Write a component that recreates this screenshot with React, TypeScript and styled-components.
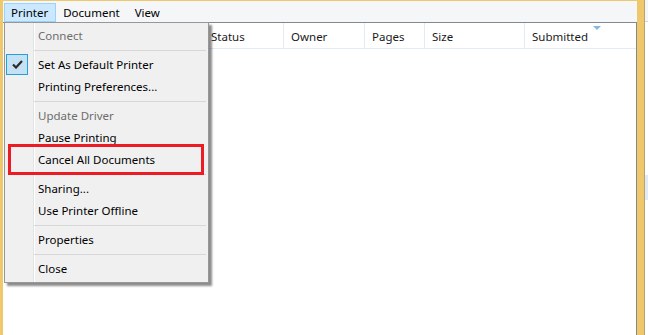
import React from "react";
import styled, { createGlobalStyle } from "styled-components";

const GlobalStyle = createGlobalStyle`
  html, body {
    margin: 0;
    padding: 0;
    background: #fff;
  }
  body {
    font-family: "Noto Sans", "Segoe UI", sans-serif;
    font-size: 11.5px;
    color: #000;
  }
`;

type MenuEntry =
  | { kind: "item"; label: string; disabled?: boolean; checked?: boolean }
  | { kind: "sep" };

const printerMenu: MenuEntry[] = [
  { kind: "item", label: "Connect", disabled: true },
  { kind: "sep" },
  { kind: "item", label: "Set As Default Printer", checked: true },
  { kind: "item", label: "Printing Preferences..." },
  { kind: "sep" },
  { kind: "item", label: "Update Driver", disabled: true },
  { kind: "item", label: "Pause Printing" },
  { kind: "item", label: "Cancel All Documents" },
  { kind: "sep" },
  { kind: "item", label: "Sharing..." },
  { kind: "item", label: "Use Printer Offline" },
  { kind: "sep" },
  { kind: "item", label: "Properties" },
  { kind: "sep" },
  { kind: "item", label: "Close" },
];

// first column is covered by the open menu
const columns = [
  { title: "" },
  { title: "Status" },
  { title: "Owner" },
  { title: "Pages" },
  { title: "Size" },
  { title: "Submitted", sorted: true },
];

// Page / window frame
const Screen = styled.div`
  position: relative;
  width: 648px;
  height: 335px;
  display: flex;
  overflow: hidden;
`;

const Window = styled.div`
  flex: 0 0 644px;
  box-sizing: border-box;
  display: flex;
  flex-direction: column;
  border-left: 3px solid #efc86c;
  border-top: 1px solid #efc86c;
  border-right: 7px solid #efc86c;
  background: #fff;
`;

const BackWindow = styled.div`
  flex: 1;
  border-left: 1px solid #b9a372;
  background: linear-gradient(
    to bottom,
    #f4f5f6 0 21px,
    #d6d6d6 21px 22px,
    #fff 22px 175px,
    #dfecf7 175px 200px,
    #fff 200px
  );
`;

// Menu bar
const MenuBar = styled.div`
  height: 21px;
  display: flex;
  align-items: flex-end;
  padding-left: 1px;
  background: #f5f6f7;
`;

const MenuBarItem = styled.div<{ $open?: boolean }>`
  height: 19px;
  box-sizing: border-box;
  display: flex;
  align-items: center;
  padding: 0 7px 0 6px;
  border: 1px solid ${(p) => (p.$open ? "#99d1ff" : "transparent")};
  background: ${(p) => (p.$open ? "#cce8ff" : "transparent")};
`;

// List view
const ListView = styled.div`
  flex: 1;
  border-top: 1px solid #828790;
  border-right: 1px solid #828790;
  background: #fff;
`;

const Header = styled.div`
  display: grid;
  grid-template-columns: 200px 80px 81px 60px 100px 1fr;
  height: 25px;
  border-bottom: 1px solid #e3ebf4;
`;

const HeaderCell = styled.div<{ $first?: boolean }>`
  position: relative;
  display: flex;
  align-items: center;
  padding: 2px 0 0 7px;
  border-left: ${(p) => (p.$first ? "none" : "1px solid #e3ebf4")};
  color: #1a1a1a;
  white-space: nowrap;
  overflow: hidden;
`;

const SortArrow = styled.span`
  position: absolute;
  left: 68px;
  top: 3px;
  width: 0;
  height: 0;
  border-left: 4px solid transparent;
  border-right: 4px solid transparent;
  border-top: 4px solid #86b8e2;
`;

// Drop-down menu
const Dropdown = styled.div`
  position: absolute;
  left: 4px;
  top: 22px;
  width: 205px;
  box-sizing: border-box;
  padding: 2px 0;
  border: 1px solid #979797;
  background: linear-gradient(
    to right,
    #f0f0f0 28px,
    #e2e3e3 28px 29px,
    #ffffff 29px 30px,
    #f0f0f0 30px
  );
  box-shadow: 3px 3px 2px rgba(0, 0, 0, 0.45);
`;

const Item = styled.div<{ $disabled?: boolean }>`
  height: 22px;
  box-sizing: border-box;
  padding-bottom: 1px;
  display: flex;
  align-items: center;
  color: ${(p) => (p.$disabled ? "#6d6d6d" : "#000")};
  white-space: nowrap;
`;

const Gutter = styled.div`
  width: 28px;
  height: 21px;
  display: flex;
  align-items: flex-start;
  padding-left: 1px;
  box-sizing: border-box;
`;

const CheckBox = styled.div`
  width: 22px;
  height: 21px;
  box-sizing: border-box;
  display: flex;
  align-items: center;
  justify-content: center;
  background: #c5e2f4;
  border: 1px solid #26a0da;
`;

const Label = styled.span`
  margin-left: 5px;
`;

const Separator = styled.div`
  height: 7px;
  display: flex;
  align-items: center;
  padding: 0 2px 0 29px;

  &::after {
    content: "";
    flex: 1;
    height: 1px;
    background: #d7d7d7;
  }
`;

// Annotation
const Highlight = styled.div`
  position: absolute;
  left: 8px;
  top: 144px;
  width: 196px;
  height: 31px;
  box-sizing: border-box;
  border: 3px solid #ed1c24;
`;

const CheckMark = () => (
  <svg width="11" height="9" viewBox="0 0 11 9">
    <path d="M1 4.5 L4 7.5 L10 1" fill="none" stroke="#2b2b2b" strokeWidth="2.2" />
  </svg>
);

export default function App() {
  return (
    <>
      <GlobalStyle />
      <Screen>
        <Window>
          <MenuBar>
            <MenuBarItem $open>Printer</MenuBarItem>
            <MenuBarItem>Document</MenuBarItem>
            <MenuBarItem>View</MenuBarItem>
          </MenuBar>
          <ListView>
            <Header>
              {columns.map((c, i) => (
                <HeaderCell key={i} $first={i === 0}>
                  {c.title}
                  {c.sorted && <SortArrow />}
                </HeaderCell>
              ))}
            </Header>
          </ListView>
        </Window>
        <BackWindow />

        <Dropdown>
          {printerMenu.map((entry, i) =>
            entry.kind === "sep" ? (
              <Separator key={i} />
            ) : (
              <Item key={i} $disabled={entry.disabled}>
                <Gutter>
                  {entry.checked && (
                    <CheckBox>
                      <CheckMark />
                    </CheckBox>
                  )}
                </Gutter>
                <Label>{entry.label}</Label>
              </Item>
            )
          )}
        </Dropdown>
        <Highlight />
      </Screen>
    </>
  );
}
